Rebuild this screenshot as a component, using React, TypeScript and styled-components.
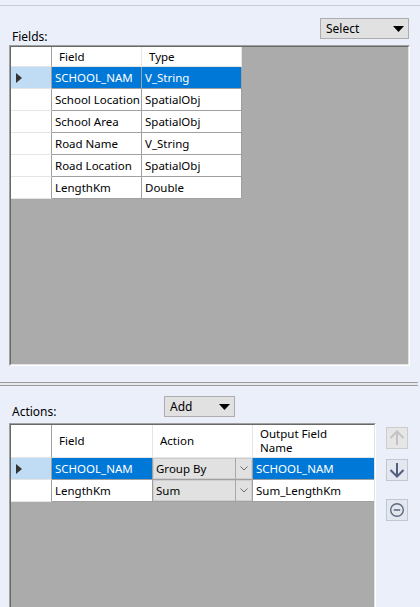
import React from 'react';
import styled, { createGlobalStyle } from 'styled-components';

const GlobalStyle = createGlobalStyle`
  html, body {
    margin: 0;
    padding: 0;
  }
  body {
    background: #ebeffa;
    font-family: "Noto Sans", "Open Sans", sans-serif;
    font-size: 11.5px;
    color: #000;
    overflow: hidden;
  }
`;

interface FieldRow {
  name: string;
  type: string;
}

interface ActionRow {
  field: string;
  action: string;
  output: string;
}

const fields: FieldRow[] = [
  { name: 'SCHOOL_NAM', type: 'V_String' },
  { name: 'School Location', type: 'SpatialObj' },
  { name: 'School Area', type: 'SpatialObj' },
  { name: 'Road Name', type: 'V_String' },
  { name: 'Road Location', type: 'SpatialObj' },
  { name: 'LengthKm', type: 'Double' },
];

const actions: ActionRow[] = [
  { field: 'SCHOOL_NAM', action: 'Group By', output: 'SCHOOL_NAM' },
  { field: 'LengthKm', action: 'Sum', output: 'Sum_LengthKm' },
];

const Page = styled.div`
  width: 420px;
  height: 607px;
  display: flex;
  flex-direction: column;
  overflow: hidden;
  & > * {
    flex: none;
  }
`;

const TopRule = styled.div`
  margin-top: 5px;
  height: 1px;
  background: #c8cbd3;
`;

const FieldsBar = styled.div`
  height: 39px;
  display: flex;
  justify-content: space-between;
  align-items: flex-end;
  padding: 0 11px 0 12px;
`;

const Label = styled.span`
  line-height: 16px;
  font-size: 12px;
`;

const DropButton = styled.div<{ $width: number }>`
  width: ${(p) => p.$width}px;
  height: 21px;
  box-sizing: border-box;
  border: 1px solid #adadad;
  background: #e1e1e1;
  display: flex;
  align-items: center;
  justify-content: space-between;
  padding: 0 4px 0 5px;
  line-height: 16px;
  font-size: 12px;
`;

const SelectButton = styled(DropButton)`
  margin-bottom: 6px;
`;

const Sunken = styled.div`
  box-sizing: border-box;
  border: 1px solid;
  border-color: #a0a0a0 #ffffff #ffffff #a0a0a0;
`;

const SunkenInner = styled.div`
  box-sizing: border-box;
  height: 100%;
  border: 1px solid;
  border-color: #696969 #e3e3e3 #e3e3e3 #696969;
  background: #ababab;
  overflow: hidden;
`;

const FieldsPanel = styled(Sunken)`
  margin: 0 10px 0 9px;
  height: 321px;
`;

const Splitter = styled.div`
  margin-top: 16px;
  width: 418px;
  height: 2px;
  border-top: 1px solid #9c9c9c;
  border-bottom: 1px solid #9c9c9c;
  background: #e6e8ee;
`;

const ActionsBar = styled.div`
  height: 37px;
  display: flex;
  align-items: flex-start;
  padding-left: 12px;
`;

const ActionsLabel = styled(Label)`
  width: 152px;
  margin-top: 18px;
`;

const AddButton = styled(DropButton)`
  margin-top: 10px;
`;

const BottomArea = styled.div`
  display: flex;
  align-items: flex-start;
  height: 200px;
`;

const ActionsPanel = styled(Sunken)`
  margin-left: 9px;
  width: 367px;
  height: 200px;
`;

const GridRow = styled.div`
  display: flex;
`;

const Cell = styled.div<{ $w: number; $h: number; $selected?: boolean }>`
  box-sizing: border-box;
  width: ${(p) => p.$w}px;
  height: ${(p) => p.$h}px;
  flex: none;
  display: flex;
  align-items: center;
  white-space: nowrap;
  overflow: hidden;
  padding-left: 3px;
  background: ${(p) => (p.$selected ? '#0078d7' : '#ffffff')};
  color: ${(p) => (p.$selected ? '#ffffff' : '#000000')};
  border-right: 1px solid #a0a0a0;
  border-bottom: 1px solid #a0a0a0;
`;

const HeaderCell = styled(Cell)`
  padding-left: 7px;
  border-right: 1px solid #e5e5e5;
  border-bottom: 1px solid #e5e5e5;
  line-height: 14px;
`;

const Corner = styled(Cell)`
  border-right: 1px solid #a0a0a0;
  border-bottom: 1px solid #e5e5e5;
`;

const RowHeader = styled(Cell)<{ $current?: boolean }>`
  background: ${(p) => (p.$current ? '#bfdcf4' : '#ffffff')};
  border-right: 1px solid #a0a0a0;
  border-bottom: 1px solid #e5e5e5;
  padding-left: 5px;
`;

const ComboCell = styled(Cell)`
  padding: 0;
  background: #e1e1e1;
  box-shadow: inset 0 0 0 1px #cfcfcf;
`;

const ComboText = styled.span`
  flex: 1;
  padding-left: 3px;
`;

const ComboArrow = styled.span`
  width: 17px;
  height: 100%;
  box-sizing: border-box;
  border-left: 1px solid #a8a8a8;
  display: flex;
  align-items: center;
  justify-content: center;
`;

const SideButtons = styled.div`
  margin-left: 10px;
  padding-top: 4px;
  display: flex;
  flex-direction: column;
`;

const SideButton = styled.div<{ $disabled?: boolean; $gap: number }>`
  width: 22px;
  height: 22px;
  box-sizing: border-box;
  margin-bottom: ${(p) => p.$gap}px;
  border: 1px solid ${(p) => (p.$disabled ? '#cccccc' : '#c2c6cf')};
  background: ${(p) => (p.$disabled ? '#e6e6e6' : '#e3e7ef')};
  display: flex;
  align-items: center;
  justify-content: center;
`;

const Triangle = () => (
  <svg width="11" height="6" viewBox="0 0 11 6">
    <polygon points="0,0 11,0 5.5,6" fill="#000" />
  </svg>
);

const RowPointer = () => (
  <svg width="6" height="10" viewBox="0 0 6 10">
    <polygon points="0,0 6,5 0,10" fill="#333" />
  </svg>
);

const Chevron = () => (
  <svg width="8" height="5" viewBox="0 0 8 5">
    <polyline points="0.5,0.5 4,4 7.5,0.5" fill="none" stroke="#6b6b6b" strokeWidth="1" />
  </svg>
);

const ArrowIcon: React.FC<{ up?: boolean; color: string }> = ({ up, color }) => (
  <svg width="16" height="16" viewBox="0 0 16 16" style={up ? undefined : { transform: 'rotate(180deg)' }}>
    <path d="M8 1.5 V15 M1.5 8 L8 1.5 L14.5 8" fill="none" stroke={color} strokeWidth="2" />
  </svg>
);

const RemoveIcon = () => (
  <svg width="16" height="16" viewBox="0 0 16 16">
    <circle cx="8" cy="8" r="6.3" fill="none" stroke="#5e6a80" strokeWidth="1.4" />
    <path d="M4.8 8 H11.2" stroke="#5e6a80" strokeWidth="1.6" />
  </svg>
);

export default function App() {
  return (
    <>
      <GlobalStyle />
      <Page>
        <TopRule />
        <FieldsBar>
          <Label>Fields:</Label>
          <SelectButton $width={89}>
            <span>Select</span>
            <Triangle />
          </SelectButton>
        </FieldsBar>
        <FieldsPanel>
          <SunkenInner>
            <GridRow>
              <Corner $w={41} $h={20} />
              <HeaderCell $w={90} $h={20}>Field</HeaderCell>
              <HeaderCell $w={100} $h={20}>Type</HeaderCell>
            </GridRow>
            {fields.map((f, i) => (
              <GridRow key={f.name}>
                <RowHeader $w={41} $h={22} $current={i === 0}>
                  {i === 0 && <RowPointer />}
                </RowHeader>
                <Cell $w={90} $h={22} $selected={i === 0}>{f.name}</Cell>
                <Cell $w={100} $h={22} $selected={i === 0}>{f.type}</Cell>
              </GridRow>
            ))}
          </SunkenInner>
        </FieldsPanel>
        <Splitter />
        <ActionsBar>
          <ActionsLabel>Actions:</ActionsLabel>
          <AddButton $width={71}>
            <span>Add</span>
            <Triangle />
          </AddButton>
        </ActionsBar>
        <BottomArea>
          <ActionsPanel>
            <SunkenInner>
              <GridRow>
                <Corner $w={41} $h={33} />
                <HeaderCell $w={101} $h={33}>Field</HeaderCell>
                <HeaderCell $w={100} $h={33}>Action</HeaderCell>
                <HeaderCell $w={122} $h={33}>
                  <span>
                    Output Field
                    <br />
                    Name
                  </span>
                </HeaderCell>
              </GridRow>
              {actions.map((a, i) => (
                <GridRow key={a.output}>
                  <RowHeader $w={41} $h={22} $current={i === 0}>
                    {i === 0 && <RowPointer />}
                  </RowHeader>
                  <Cell $w={101} $h={22} $selected={i === 0}>{a.field}</Cell>
                  <ComboCell $w={100} $h={22}>
                    <ComboText>{a.action}</ComboText>
                    <ComboArrow>
                      <Chevron />
                    </ComboArrow>
                  </ComboCell>
                  <Cell $w={122} $h={22} $selected={i === 0}>{a.output}</Cell>
                </GridRow>
              ))}
            </SunkenInner>
          </ActionsPanel>
          <SideButtons>
            <SideButton $disabled $gap={10}>
              <ArrowIcon up color="#c3c3c3" />
            </SideButton>
            <SideButton $gap={18}>
              <ArrowIcon color="#4f5f7d" />
            </SideButton>
            <SideButton $gap={0}>
              <RemoveIcon />
            </SideButton>
          </SideButtons>
        </BottomArea>
      </Page>
    </>
  );
}
